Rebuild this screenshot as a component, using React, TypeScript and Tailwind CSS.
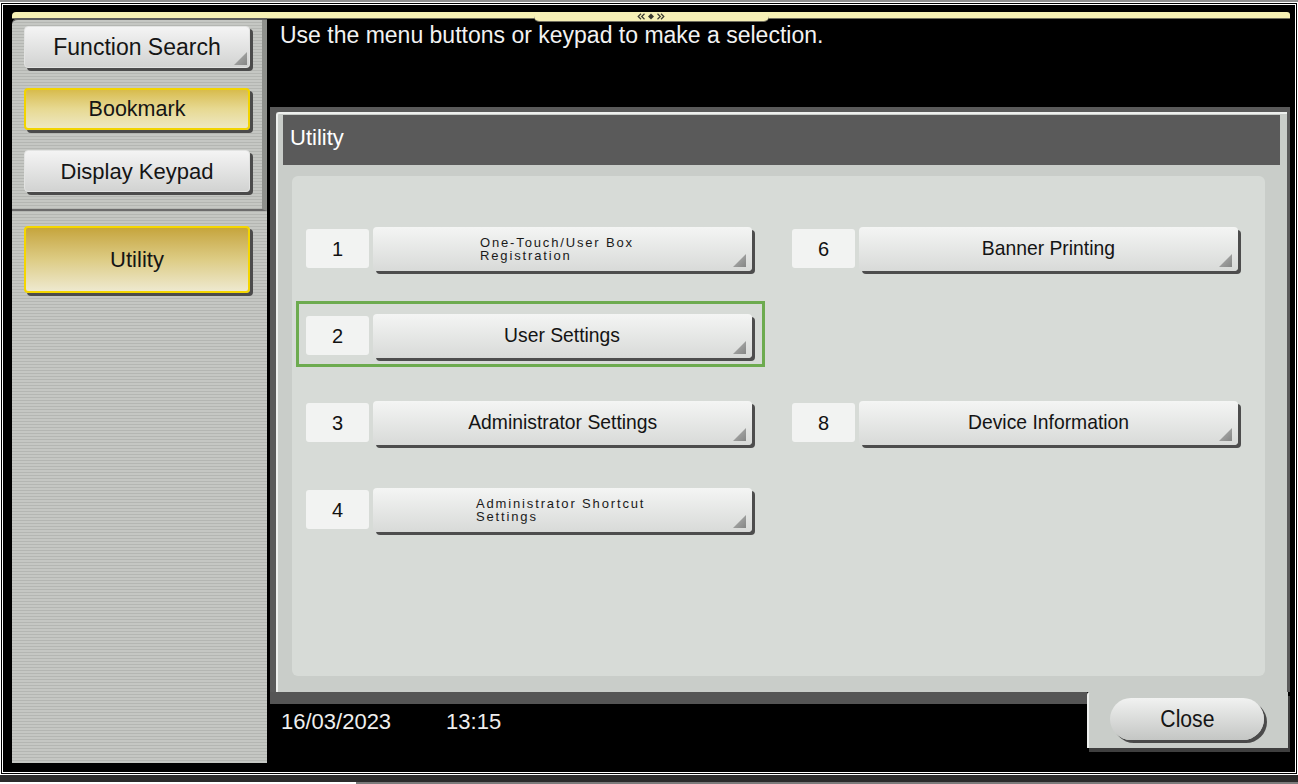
import React from 'react';

interface MenuItemProps {
  num?: string;
  label?: string;
  lines?: string[];
  indent?: string;
  active?: boolean;
}

const Corner: React.FC<{ className: string }> = ({ className }) => (
  <svg className={className} width="13" height="13" viewBox="0 0 13 13">
    <defs>
      <linearGradient id="tri" x1="0" y1="0" x2="1" y2="1">
        <stop offset="0" stopColor="#b4b5b4" />
        <stop offset="1" stopColor="#858685" />
      </linearGradient>
    </defs>
    <path d="M13 0 L13 13 L0 13 Z" fill="url(#tri)" />
  </svg>
);

const MenuItem: React.FC<MenuItemProps> = ({ num, label, lines, indent, active }) => {
  if (!num) return <div className="h-[66px]" />;
  return (
    <div
      className={`flex items-start h-[66px] pt-[10px] pl-[7px] border-[3px] ${
        active ? 'border-[#6dab4f]' : 'border-transparent'
      }`}
    >
      <div className="mt-[2px] w-[63px] h-[39px] rounded-[3px] bg-[#f2f3f2] flex items-center justify-center text-[20px] text-[#111]">
        {num}
      </div>
      <div
        className={`relative ml-[4px] w-[379px] h-[44px] rounded-[4px] bg-linear-to-b from-[#f4f5f4] to-[#d8dad8] shadow-[3px_3px_0_#4d4d4d] flex items-center ${
          lines ? `justify-start ${indent}` : 'justify-center'
        }`}
      >
        {lines ? (
          <div className="flex flex-col items-start whitespace-nowrap pt-[1px] text-[13px] leading-[12.5px] tracking-[1.85px] text-[#1a1a1a]">
            {lines.map((l) => (
              <span key={l}>{l}</span>
            ))}
          </div>
        ) : (
          <span className="inline-block scale-x-[0.92] pb-[3px] text-[21px] text-[#141414]">{label}</span>
        )}
        <Corner className="absolute right-[6px] bottom-[4px]" />
      </div>
    </div>
  );
};

interface SideButtonProps {
  label: string;
  yellow?: boolean;
  tall?: boolean;
  corner?: boolean;
  size?: string;
}

const SideButton: React.FC<SideButtonProps> = ({ label, yellow, tall, corner, size = 'text-[22px]' }) => {
  const skin = yellow
    ? tall
      ? 'border-2 border-[#f4d600] bg-linear-to-b from-[#c6a53b] via-[#ddcc84] to-[#eee9cf]'
      : 'border-2 border-[#f2d400] bg-linear-to-b from-[#d8bc4c] via-[#e7d992] to-[#eee8c2]'
    : 'border border-[#e2e3e2] bg-linear-to-b from-[#f4f4f4] to-[#d2d3d2]';
  return (
    <div
      className={`relative w-[226px] ${tall ? 'h-[67px]' : 'h-[42px]'} rounded-[4px] shadow-[3px_3px_0_#4b4b4b] flex items-center justify-center ${skin}`}
    >
      <span className={`${size} text-[#151515]`}>{label}</span>
      {corner && <Corner className="absolute right-[2px] bottom-[2px]" />}
    </div>
  );
};

const stripes =
  'bg-[repeating-linear-gradient(180deg,#c5c7c3_0px,#c5c7c3_2px,#b4b6b2_2px,#b4b6b2_3px)]';

const TopBar = () => (
  <div className="flex items-start h-[6px] shrink-0">
    <div className="flex-1 h-[6px] rounded-tl-[4px] bg-[#f6f0b4] shadow-[0_1px_0_#6f6d5d]" />
    <div className="w-[235px] h-[9px] rounded-b-[5px] bg-[#f6f0b6] shadow-[0_1px_0_#6f6d5d] flex items-center justify-center">
      <svg width="28" height="7" viewBox="0 0 28 7">
        <g fill="none" stroke="#3a3a30" strokeWidth="1.2">
          <path d="M4 0.8 L1.2 3.5 L4 6.2" />
          <path d="M7.5 0.8 L4.7 3.5 L7.5 6.2" />
          <path d="M20.5 0.8 L23.3 3.5 L20.5 6.2" />
          <path d="M24 0.8 L26.8 3.5 L24 6.2" />
        </g>
        <path d="M14 0.5 L17 3.5 L14 6.5 L11 3.5 Z" fill="#3a3a30" />
      </svg>
    </div>
    <div className="flex-1 h-[6px] rounded-tr-[3px] bg-[#f6f0b4] shadow-[0_1px_0_#6f6d5d]" />
  </div>
);

const Sidebar = () => (
  <div className={`w-[255px] shrink-0 flex flex-col rounded-tl-[6px] border-t-2 border-[#5c5c5c] ${stripes}`}>
    <div className="flex flex-col gap-[20px] pl-[12px] pt-[6px] pb-[17px] border-b-2 border-b-[#6b6b6b] border-r-[5px] border-r-[#8e908c]">
      <SideButton label="Function Search" corner size="text-[23px]" />
      <SideButton label="Bookmark" yellow size="text-[21.5px]" />
      <SideButton label="Display Keypad" />
    </div>
    <div className="pl-[12px] pt-[15px]">
      <SideButton label="Utility" yellow tall />
    </div>
  </div>
);

const items: MenuItemProps[] = [
  { num: '1', lines: ['One-Touch/User Box', 'Registration'], indent: 'pl-[107px]' },
  { num: '6', label: 'Banner Printing' },
  { num: '2', label: 'User Settings', active: true },
  {},
  { num: '3', label: 'Administrator Settings' },
  { num: '8', label: 'Device Information' },
  { num: '4', lines: ['Administrator Shortcut', 'Settings'], indent: 'pl-[103px]' },
  {},
];

const Main = () => (
  <div className="ml-[3px] w-[1020px] flex flex-col">
    <div className="h-[89px] shrink-0 pl-[10px] pt-[4px] text-[23px] leading-[26px] text-[#f2f2f2]">
      Use the menu buttons or keypad to make a selection.
    </div>
    <div className="bg-[#5a5a5a] pt-[5px] pl-[6px] pr-[3px]">
      <div className="bg-[#c9cdc9] border-t-2 border-l-2 border-[#eef0ee] rounded-tl-[3px] pt-[1px] pl-[5px] pr-[7px] pb-[16px]">
        <div className="h-[50px] bg-[#5a5a5a] flex items-center pl-[7px] pb-[5px] text-[22px] text-white">Utility</div>
        <div className="mt-[11px] ml-[9px] mr-[15px] h-[500px] rounded-[6px] bg-[#d7dbd7] pl-[4px] pt-[38px]">
          <div className="grid grid-cols-[469px_469px] gap-x-[17px] gap-y-[21px]">
            {items.map((it, i) => (
              <MenuItem key={i} {...it} />
            ))}
          </div>
        </div>
      </div>
    </div>
    <div className="flex">
      <div className="flex-1 flex flex-col">
        <div className="h-[12px] bg-[#555]" />
        <div className="flex gap-[55px] pl-[11px] pt-[5px] text-[22px] leading-[26px] text-[#eeeeee]">
          <span>16/03/2023</span>
          <span>13:15</span>
        </div>
      </div>
      <div className="w-[201px] h-[56px] mr-[2px] bg-[#c9cdc9] border-l-2 border-[#eef0ee] rounded-tl-[3px] shadow-[2px_4px_0_#3f3f3f] pl-[21px] pt-[6px]">
        <div className="w-[154px] h-[42px] rounded-full bg-linear-to-b from-[#f1f2f1] to-[#c4c6c4] shadow-[3px_3px_0_#4a4a4a] flex items-center justify-center">
          <span className="inline-block scale-x-[0.92] text-[23px] text-[#151515]">Close</span>
        </div>
      </div>
    </div>
  </div>
);

export default function App() {
  return (
    <div className="w-[1298px] h-[784px] bg-black flex flex-col overflow-hidden font-['Liberation_Sans',Arial,sans-serif]">
      <div className="h-[2px] shrink-0 bg-[#8f8f8f]" />
      <div className="h-[773px] shrink-0 border-[3px] border-double border-white flex flex-col pt-[7px] pl-[9px] pr-[5px] pb-[9px]">
        <TopBar />
        <div className="flex-1 flex min-h-0">
          <Sidebar />
          <Main />
        </div>
      </div>
      <div className="h-[7px] shrink-0 bg-[#2b2b2b]" />
      <div className="h-[2px] shrink-0 flex">
        <div className="w-[356px] bg-white" />
        <div className="flex-1 bg-[#7b7b7b]" />
      </div>
    </div>
  );
}
